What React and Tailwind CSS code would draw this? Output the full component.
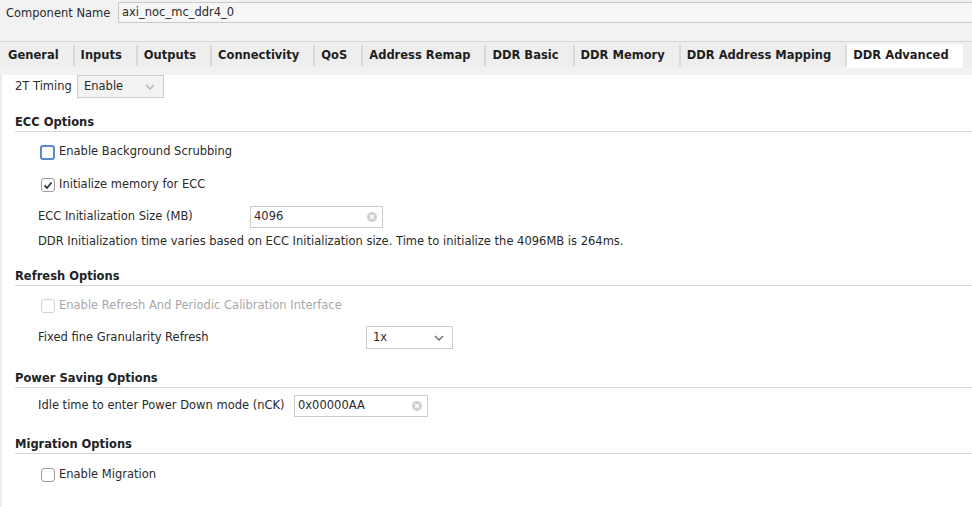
import React from "react";

const tabs = [
  "General",
  "Inputs",
  "Outputs",
  "Connectivity",
  "QoS",
  "Address Remap",
  "DDR Basic",
  "DDR Memory",
  "DDR Address Mapping",
  "DDR Advanced",
];

function Chevron({ color = "#9a9a9a" }) {
  return (
    <svg width="10" height="6" viewBox="0 0 10 6">
      <polyline points="1,1 5,5 9,1" fill="none" stroke={color} strokeWidth="1.3" />
    </svg>
  );
}

function ClearIcon() {
  return (
    <svg width="10" height="10" viewBox="0 0 10 10">
      <circle cx="5" cy="5" r="5" fill="#cfcfcf" />
      <path d="M3 3 L7 7 M7 3 L3 7" stroke="#ffffff" strokeWidth="1.3" />
    </svg>
  );
}

function Checkbox({ checked, focused, disabled }) {
  const border = focused
    ? "border-2 border-[#5a86d6] w-[15px] h-[15px] -ml-[1px]"
    : disabled
    ? "border border-[#d2d2d2] bg-[#f0f0f0] w-[14px] h-[14px]"
    : "border border-[#9d9d9d] w-[14px] h-[14px]";
  return (
    <div className={`flex items-center justify-center rounded-[3px] bg-white ${border}`}>
      {checked && (
        <svg width="10" height="9" viewBox="0 0 10 9">
          <polyline points="1.5,4.5 4,7 8.5,1.5" fill="none" stroke="#333" strokeWidth="1.8" />
        </svg>
      )}
    </div>
  );
}

function TextBox({ value, width }) {
  return (
    <div className={`flex h-[22px] items-center justify-between border border-[#cccccc] bg-white pl-[3px] pr-[5px] ${width}`}>
      <span>{value}</span>
      <ClearIcon />
    </div>
  );
}

function SectionHeader({ title, mt }) {
  return (
    <div className={`ml-[13px] h-[18px] border-b border-[#d8d8d8] font-bold leading-[16px] text-[#222] ${mt}`}>
      {title}
    </div>
  );
}

function CheckRow({ label, mt, ...rest }) {
  return (
    <div className={`ml-[39px] flex h-[16px] items-center ${mt}`}>
      <div className="flex w-[18px] items-center">
        <Checkbox {...rest} />
      </div>
      <span className={rest.disabled ? "text-[#a8a8a8]" : ""}>{label}</span>
    </div>
  );
}

export default function App() {
  return (
    <div className="h-[507px] w-[972px] overflow-hidden bg-[#f2f2f2] font-['DejaVu_Sans',sans-serif] text-[11.5px] text-[#2a2a2a]">
      <div className="flex h-[41px] items-start pt-[2px]">
        <span className="ml-[6px] mt-[3px] w-[112px]">Component Name</span>
        <div className="flex h-[21px] flex-1 items-center border border-r-0 border-[#c9c9c9] bg-[#f6f6f6] pl-[3px]">
          axi_noc_mc_ddr4_0
        </div>
      </div>

      <div className="flex h-[27px] border-t border-[#d6d6d6] bg-[#eeeeee] pl-[2px] pt-[2px] text-[11.5px] font-bold text-[#1e1e1e]">
        {tabs.map((t, i) => {
          const active = t === "DDR Advanced";
          return (
            <React.Fragment key={t}>
              {i > 0 && <div className="mt-[1px] h-[21px] w-[2px] bg-[#d9d9d9]" />}
              <div className={`flex items-center pl-[6px] pr-[14px] ${active ? "bg-white" : ""}`}>{t}</div>
            </React.Fragment>
          );
        })}
      </div>

      <div className="h-[439px] border-l-2 border-[#ececec] bg-white">
        <div className="mt-[7px] flex h-[23px] items-center">
          <span className="ml-[13px] w-[62px]">2T Timing</span>
          <div className="flex h-[23px] w-[87px] items-center justify-between border border-[#cdcdcd] bg-[#f3f3f3] pl-[6px] pr-[8px]">
            <span>Enable</span>
            <Chevron color="#b0b0b0" />
          </div>
        </div>

        <SectionHeader title="ECC Options" mt="mt-[16px]" />
        <CheckRow label="Enable Background Scrubbing" focused mt="mt-[12px]" />
        <CheckRow label="Initialize memory for ECC" checked mt="mt-[17px]" />

        <div className="mt-[13px] flex items-center">
          <span className="ml-[36px] w-[212px]">ECC Initialization Size (MB)</span>
          <TextBox value="4096" width="w-[133px]" />
        </div>
        <div className="ml-[36px] mt-[5px] h-[16px] leading-[16px]">
          DDR Initialization time varies based on ECC Initialization size. Time to initialize the 4096MB is 264ms.
        </div>

        <SectionHeader title="Refresh Options" mt="mt-[19px]" />
        <CheckRow label="Enable Refresh And Periodic Calibration Interface" disabled mt="mt-[12px]" />

        <div className="mt-[12px] flex items-center">
          <span className="ml-[36px] w-[328px]">Fixed fine Granularity Refresh</span>
          <div className="flex h-[23px] w-[87px] items-center justify-between border border-[#cdcdcd] bg-white pl-[6px] pr-[8px]">
            <span>1x</span>
            <Chevron color="#666" />
          </div>
        </div>

        <SectionHeader title="Power Saving Options" mt="mt-[21px]" />
        <div className="mt-[7px] flex items-center">
          <span className="ml-[36px] w-[256px]">Idle time to enter Power Down mode (nCK)</span>
          <TextBox value="0x00000AA" width="w-[134px]" />
        </div>

        <SectionHeader title="Migration Options" mt="mt-[19px]" />
        <CheckRow label="Enable Migration" mt="mt-[13px]" />
      </div>
    </div>
  );
}
